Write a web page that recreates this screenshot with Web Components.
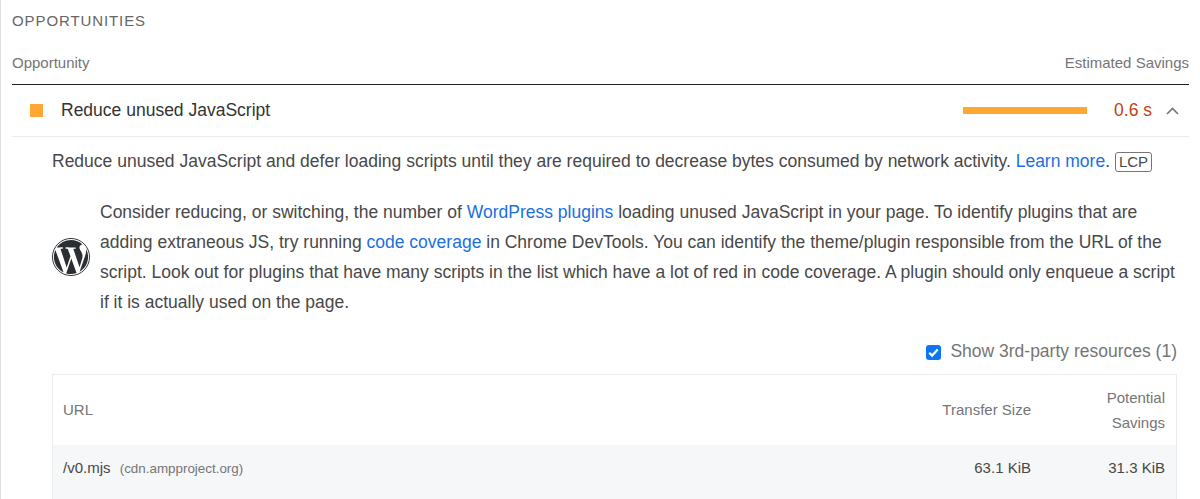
<!DOCTYPE html>
<html>
<head>
<meta charset="utf-8">
<title>Opportunities</title>
<style>
  html, body { margin: 0; height: 100%; overflow: hidden; background: #fff; }
  body { font-family: "Liberation Sans", Arial, sans-serif; color: #212121; }
</style>
</head>
<body>
<audit-panel>
  <audit-row title="Reduce unused JavaScript" savings="0.6 s">
    <audit-description>
      Reduce unused JavaScript and defer loading scripts until they are required to decrease bytes consumed by network activity. <a href="#">Learn more</a>. <metric-tag>LCP</metric-tag>
    </audit-description>
    <stack-note>
      Consider reducing, or switching, the number of <a href="#">WordPress plugins</a> loading unused JavaScript in your page. To identify plugins that are adding extraneous JS, try running <a href="#">code coverage</a> in Chrome DevTools. You can identify the theme/plugin responsible from the URL of the script. Look out for plugins that have many scripts in the list which have a lot of red in code coverage. A plugin should only enqueue a script if it is actually used on the page.
    </stack-note>
    <third-party-toggle>Show 3rd-party resources (1)</third-party-toggle>
    <resource-table></resource-table>
  </audit-row>
</audit-panel>

<script>
class AuditPanel extends HTMLElement {
  constructor () {
    super()
    this.shadow = this.attachShadow({ mode: 'open' })
  }

  connectedCallback () {
    this.shadow.innerHTML = `
    <style>
      :host{
        border-left: 1px solid #e0e0e0;
        box-sizing: border-box;
        display: block;
        height: 100vh;
        overflow: hidden;
        padding: 0 11px;
        width: 1200px;
      }
      .title{
        color: #666;
        font-size: 15px;
        letter-spacing: 0.9px;
        line-height: 20px;
        padding-top: 11px;
        text-transform: uppercase;
      }
      .heading{
        border-bottom: 1px solid #212121;
        box-sizing: border-box;
        color: #757575;
        display: flex;
        font-size: 15px;
        height: 54px;
        justify-content: space-between;
        line-height: 20px;
        padding-top: 22px;
      }
    </style>
    <div class="title">Opportunities</div>
    <div class="heading"><span>Opportunity</span><span>Estimated Savings</span></div>
    <slot></slot>
    `
  }
}

class AuditRow extends HTMLElement {
  constructor () {
    super()
    this.shadow = this.attachShadow({ mode: 'open' })
  }

  connectedCallback () {
    this.shadow.innerHTML = `
    <style>
      :host{
        display: block;
      }
      .summary{
        align-items: center;
        border-bottom: 1px solid #ebebeb;
        box-sizing: border-box;
        display: flex;
        height: 52px;
        padding-left: 18px;
      }
      .swatch{
        background: #ffa733;
        flex: none;
        height: 13px;
        margin-right: 18px;
        width: 13px;
      }
      .name{
        color: #333;
        flex: 1;
        font-size: 17.5px;
      }
      .bar{
        background: #ffa733;
        height: 7px;
        margin-right: 27px;
        width: 124px;
      }
      .value{
        color: #c2410f;
        font-size: 17.5px;
        margin-right: 14px;
        text-align: right;
        white-space: nowrap;
        width: 38px;
      }
      svg{
        flex: none;
        margin-right: 10px;
      }
      .body{
        padding: 0 12px 0 40px;
      }
    </style>
    <div class="summary">
      <span class="swatch"></span>
      <span class="name">${this.getAttribute('title')}</span>
      <span class="bar"></span>
      <span class="value">${this.getAttribute('savings')}</span>
      <svg width="13" height="8" viewBox="0 0 13 8"><path d="M1 7l5.5-5.5L12 7" fill="none" stroke="#757575" stroke-width="1.6"/></svg>
    </div>
    <div class="body"><slot></slot></div>
    `
  }
}

class AuditDescription extends HTMLElement {
  constructor () {
    super()
    this.attachShadow({ mode: 'open' }).innerHTML = `
    <style>
      :host{
        color: #484848;
        display: block;
        font-size: 17.5px;
        height: 24px;
        line-height: 24px;
        padding-top: 12px;
        white-space: nowrap;
      }
      ::slotted(a){
        color: #1a6fe0;
        text-decoration: none;
      }
    </style>
    <slot></slot>
    `
  }
}

class MetricTag extends HTMLElement {
  constructor () {
    super()
    this.attachShadow({ mode: 'open' }).innerHTML = `
    <style>
      :host{
        border: 1px solid #757575;
        border-radius: 3px;
        color: #484848;
        display: inline-block;
        font-size: 15px;
        line-height: 18px;
        padding: 0 3px;
      }
    </style>
    <slot></slot>
    `
  }
}

class StackNote extends HTMLElement {
  constructor () {
    super()
    this.attachShadow({ mode: 'open' }).innerHTML = `
    <style>
      :host{
        align-items: center;
        color: #484848;
        display: flex;
        font-size: 17.5px;
        gap: 10px;
        line-height: 30px;
        padding-top: 24px;
      }
      svg{
        flex: none;
      }
      ::slotted(a){
        color: #1a6fe0;
        text-decoration: none;
      }
    </style>
    <svg width="38" height="38" viewBox="0 0 24 24" fill="#2b2f33">
      <circle cx="12" cy="12" r="11.7" fill="none" stroke="#2b2f33" stroke-width=".6"/>
      <path d="M21.469 6.825c.84 1.537 1.318 3.3 1.318 5.175 0 3.979-2.156 7.456-5.363 9.325l3.295-9.527c.615-1.54.82-2.771.82-3.864 0-.405-.026-.78-.07-1.11m-7.981.105c.647-.03 1.232-.105 1.232-.105.582-.075.514-.93-.067-.899 0 0-1.755.135-2.88.135-1.064 0-2.85-.15-2.85-.15-.585-.03-.661.855-.075.885 0 0 .54.061 1.125.09l1.68 4.605-2.37 7.08L5.354 6.9c.649-.03 1.234-.1 1.234-.1.585-.075.516-.93-.065-.896 0 0-1.746.138-2.874.138-.2 0-.438-.008-.69-.015C4.911 3.15 8.235 1.215 12 1.215c2.809 0 5.365 1.072 7.286 2.833-.046-.003-.091-.009-.141-.009-1.06 0-1.812.923-1.812 1.914 0 .89.513 1.643 1.06 2.531.411.72.89 1.643.89 2.977 0 .915-.354 1.994-.821 3.479l-1.075 3.585-3.9-11.61.001.014zM12 22.784c-1.059 0-2.081-.153-3.048-.437l3.237-9.406 3.315 9.087c.024.053.05.101.078.149-1.12.393-2.325.609-3.582.609M1.211 12c0-1.564.336-3.05.935-4.39L7.29 21.709C3.694 19.96 1.212 16.271 1.211 12"/>
    </svg>
    <div><slot></slot></div>
    `
  }
}

class ThirdPartyToggle extends HTMLElement {
  constructor () {
    super()
    this.attachShadow({ mode: 'open' }).innerHTML = `
    <style>
      :host{
        align-items: center;
        color: #757575;
        display: flex;
        font-size: 17.5px;
        gap: 9px;
        height: 24px;
        justify-content: flex-end;
        padding-top: 22px;
      }
      .box{
        background: #0b76f0;
        border-radius: 3px;
        display: block;
        height: 15px;
        margin-top: 2px;
        width: 15px;
      }
    </style>
    <svg class="box" viewBox="0 0 15 15"><path d="M3.2 7.7l2.9 2.9 5.6-6" fill="none" stroke="#fff" stroke-width="2.2"/></svg>
    <span><slot></slot></span>
    `
  }
}

class ResourceTable extends HTMLElement {
  constructor () {
    super()
    this.attachShadow({ mode: 'open' }).innerHTML = `
    <style>
      :host{
        border: 1px solid #ebebeb;
        display: block;
        font-size: 15px;
        margin-top: 11px;
      }
      .head, .row{
        display: grid;
        grid-template-columns: 1fr 120px 134px;
        padding: 0 11px 0 10px;
      }
      .head{
        align-items: center;
        color: #757575;
        height: 70px;
        line-height: 25px;
      }
      .head .lift{
        padding-bottom: 2px;
      }
      .row{
        align-items: center;
        background: #f5f7f8;
        color: #484848;
        height: 44px;
        padding-bottom: 42px;
      }
      .num{
        text-align: right;
      }
      .host{
        color: #757575;
        font-size: 13.4px;
        margin-left: 5px;
      }
    </style>
    <div class="head">
      <span class="lift">URL</span>
      <span class="num lift">Transfer Size</span>
      <span class="num">Potential<br>Savings</span>
    </div>
    <div class="row">
      <span>/v0.mjs <span class="host">(cdn.ampproject.org)</span></span>
      <span class="num">63.1 KiB</span>
      <span class="num">31.3 KiB</span>
    </div>
    `
  }
}

customElements.define('audit-panel', AuditPanel)
customElements.define('audit-row', AuditRow)
customElements.define('audit-description', AuditDescription)
customElements.define('metric-tag', MetricTag)
customElements.define('stack-note', StackNote)
customElements.define('third-party-toggle', ThirdPartyToggle)
customElements.define('resource-table', ResourceTable)
</script>
</body>
</html>
